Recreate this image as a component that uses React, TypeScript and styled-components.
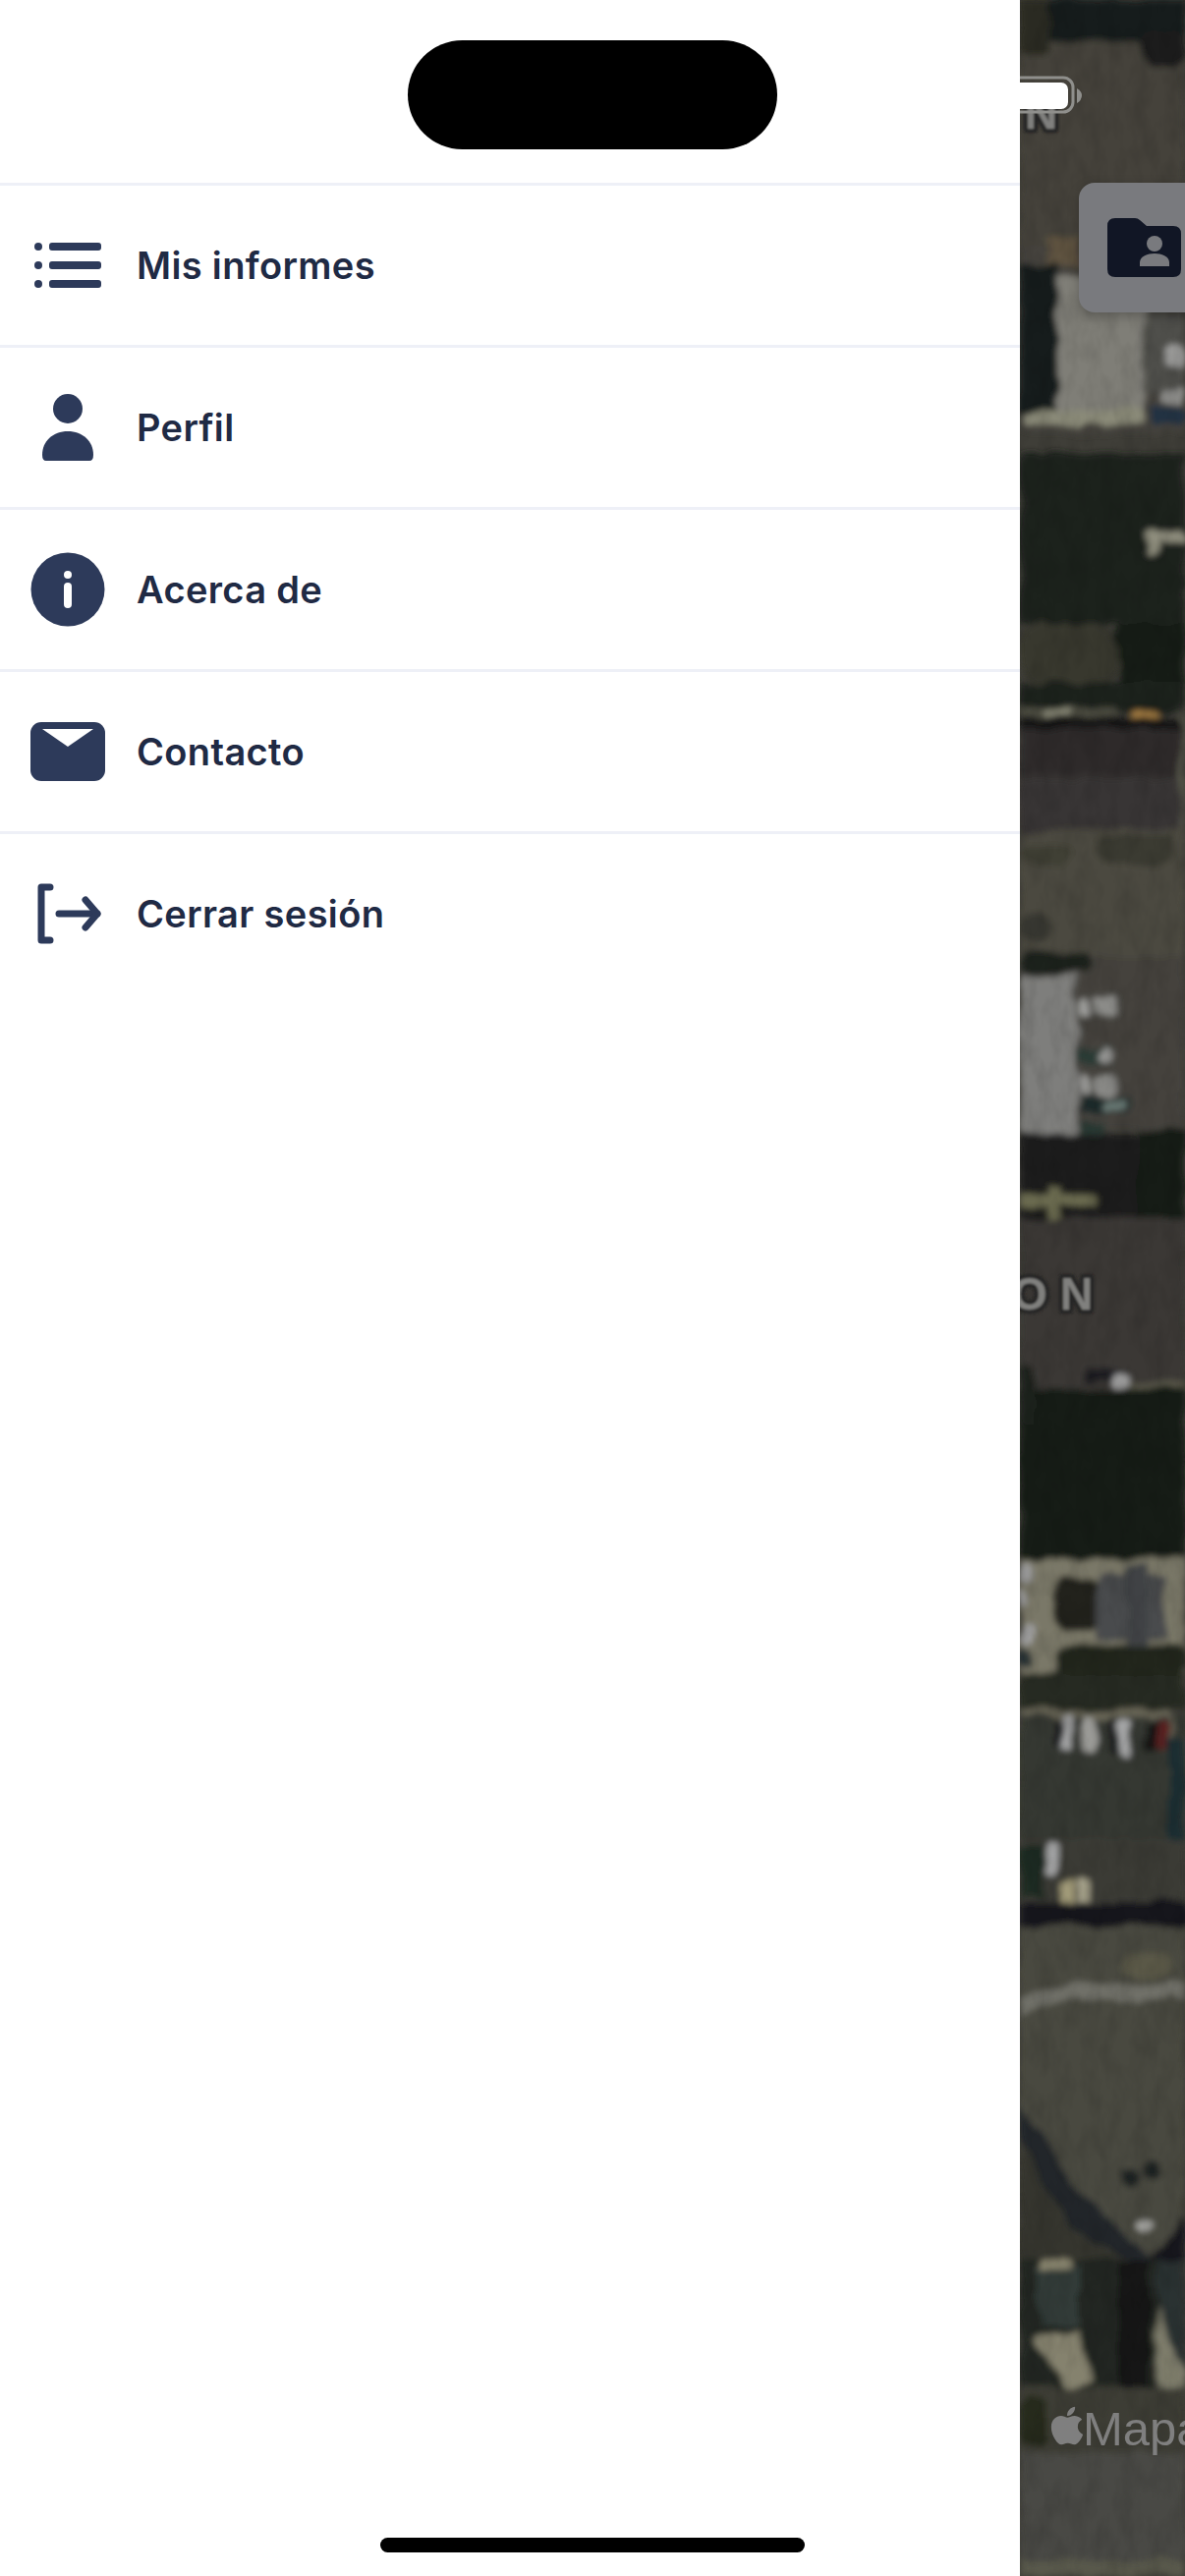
import styled, { createGlobalStyle } from 'styled-components';
import { FaApple } from 'react-icons/fa';

const GlobalStyle = createGlobalStyle`
  html, body {
    margin: 0;
    padding: 0;
    background: #fff;
  }
`;

const Screen = styled.div`
  position: relative;
  display: flex;
  width: 1206px;
  height: 2622px;
  overflow: hidden;
  font-family: Inter, 'Liberation Sans', sans-serif;
`;

const Drawer = styled.nav`
  width: 1038px;
  flex-shrink: 0;
  padding-top: 186px;
  box-sizing: border-box;
  background: #fff;
`;

const MenuRow = styled.div`
  display: flex;
  align-items: center;
  gap: 32px;
  height: 165px;
  box-sizing: border-box;
  padding-left: 31px;
  border-top: 3px solid #eef0f7;
`;

const MenuIcon = styled.svg`
  width: 76px;
  height: 76px;
  flex-shrink: 0;
  color: #2d3a5a;
`;

const MenuLabel = styled.span`
  color: #1f2a44;
  font-size: 38px;
  font-weight: 600;
  letter-spacing: 0.35px;
  line-height: 1;
`;

const MapPane = styled.div`
  position: relative;
  flex: 1;
  overflow: hidden;
  background: #3f3e38;
`;

const MapArt = styled.svg`
  display: block;
  width: 168px;
  height: 2622px;
`;

const MapLabel = styled.text`
  font-family: 'Liberation Sans', sans-serif;
  font-size: 46px;
  font-weight: 700;
  fill: #80807e;
  stroke: #282725;
  stroke-width: 9px;
  stroke-linejoin: round;
  paint-order: stroke;
`;

const Battery = styled.svg`
  position: absolute;
  left: 0;
  top: 76px;
  width: 66px;
  height: 42px;
`;

const FolderButton = styled.div`
  position: absolute;
  left: 60px;
  top: 186px;
  width: 140px;
  height: 132px;
  display: flex;
  align-items: center;
  padding-left: 29px;
  box-sizing: border-box;
  border-radius: 16px;
  background: #797a7e;
  box-shadow: 0 4px 12px rgba(0, 0, 0, 0.25);
`;

const FolderIcon = styled.svg`
  width: 75px;
  height: 60px;
  flex-shrink: 0;
`;

const Attribution = styled.div`
  position: absolute;
  left: 26px;
  top: 2446px;
  display: flex;
  align-items: center;
  color: #7f7f7f;
  font-family: 'Liberation Sans', sans-serif;
  font-size: 49px;
  line-height: 52px;
  white-space: nowrap;

  svg {
    margin: 0 -6px 7px 0;
  }
`;

const Island = styled.div`
  position: absolute;
  left: 415px;
  top: 41px;
  width: 376px;
  height: 111px;
  border-radius: 56px;
  background: #000;
`;

const HomeIndicator = styled.div`
  position: absolute;
  left: 387px;
  top: 2583px;
  width: 432px;
  height: 15px;
  border-radius: 8px;
  background: #000;
`;

type Shape = { x: number; y: number; w: number; h: number; c: string; r?: number };

// map blocks from top to bottom, x is measured from the drawer edge
const blocks: Shape[] = [
  { x: 0, y: 0, w: 168, h: 250, c: '#44423b' },
  { x: 0, y: 0, w: 32, h: 55, c: '#2a2c24' },
  { x: 30, y: 0, w: 138, h: 42, c: '#191c1b' },
  { x: 125, y: 30, w: 43, h: 38, c: '#1c1f1d', r: 14 },
  { x: 0, y: 250, w: 168, h: 190, c: '#45433d' },
  { x: 28, y: 240, w: 32, h: 32, c: '#5e5340' },
  { x: 0, y: 268, w: 40, h: 150, c: '#171c1d' },
  { x: 38, y: 280, w: 90, h: 140, c: '#7f7e77' },
  { x: 4, y: 418, w: 122, h: 14, c: '#8a8a78' },
  { x: 125, y: 322, w: 43, h: 78, c: '#4f4f4c' },
  { x: 146, y: 354, w: 22, h: 18, c: '#9a9a98', r: 4 },
  { x: 144, y: 395, w: 24, h: 16, c: '#8f8f8c', r: 4 },
  { x: 132, y: 415, w: 36, h: 18, c: '#233043', r: 7 },
  { x: 0, y: 462, w: 168, h: 173, c: '#1b201b' },
  { x: 125, y: 540, w: 43, h: 13, c: '#8e8d7d', r: 6 },
  { x: 128, y: 538, w: 12, h: 28, c: '#8e8d7d', r: 6 },
  { x: 0, y: 635, w: 100, h: 60, c: '#39392f', r: 20 },
  { x: 100, y: 635, w: 68, h: 85, c: '#171c18' },
  { x: 0, y: 695, w: 168, h: 30, c: '#1c211d' },
  { x: 0, y: 720, w: 100, h: 10, c: '#4c4c40' },
  { x: 26, y: 722, w: 30, h: 7, c: '#8a8a78' },
  { x: 115, y: 722, w: 24, h: 8, c: '#a88045', r: 3 },
  { x: 0, y: 730, w: 168, h: 12, c: '#151819' },
  { x: 0, y: 742, w: 165, h: 50, c: '#2e2b2c' },
  { x: 0, y: 793, w: 165, h: 52, c: '#383536' },
  { x: 163, y: 730, w: 5, h: 250, c: '#55544a' },
  { x: 0, y: 845, w: 168, h: 130, c: '#4b4a3f' },
  { x: 0, y: 860, w: 50, h: 20, c: '#3f3f34', r: 9 },
  { x: 80, y: 850, w: 75, h: 30, c: '#3a3a30', r: 12 },
  { x: 0, y: 930, w: 30, h: 30, c: '#383930', r: 12 },
  { x: 0, y: 975, w: 168, h: 175, c: '#45433e' },
  { x: 0, y: 968, w: 70, h: 22, c: '#1d211c', r: 8 },
  { x: 0, y: 992, w: 58, h: 163, c: '#7e7e7c', r: 3 },
  { x: 61, y: 1015, w: 11, h: 20, c: '#9c9c9a', r: 5 },
  { x: 76, y: 1017, w: 22, h: 16, c: '#8b8b88', r: 3 },
  { x: 60, y: 1067, w: 34, h: 16, c: '#2c3a36', r: 3 },
  { x: 81, y: 1068, w: 14, h: 14, c: '#9a9a98', r: 6 },
  { x: 59, y: 1096, w: 12, h: 18, c: '#9c9c9a', r: 5 },
  { x: 75, y: 1096, w: 22, h: 18, c: '#8b8b88', r: 4 },
  { x: 60, y: 1116, w: 50, h: 16, c: '#1d2a2c', r: 3 },
  { x: 86, y: 1120, w: 20, h: 10, c: '#6b7a76', r: 4 },
  { x: 60, y: 1140, w: 30, h: 16, c: '#2c3a36', r: 3 },
  { x: 0, y: 1155, w: 168, h: 100, c: '#1b1f1a' },
  { x: 120, y: 1150, w: 48, h: 110, c: '#161a18' },
  { x: 0, y: 1216, w: 78, h: 12, c: '#6a6a50' },
  { x: 28, y: 1206, w: 12, h: 36, c: '#6a6a50' },
  { x: 0, y: 1240, w: 168, h: 175, c: '#3a3936' },
  { x: 66, y: 1395, w: 40, h: 12, c: '#1a1d22', r: 4 },
  { x: 96, y: 1398, w: 14, h: 16, c: '#a5a5a5', r: 5 },
  { x: 110, y: 1409, w: 58, h: 6, c: '#5b5a4c' },
  { x: 0, y: 1415, w: 168, h: 172, c: '#181d18' },
  { x: 0, y: 1390, w: 14, h: 60, c: '#1e221e', r: 6 },
  { x: 0, y: 1587, w: 168, h: 118, c: '#7a7868' },
  { x: 0, y: 1590, w: 12, h: 22, c: '#9e9e9e', r: 5 },
  { x: 0, y: 1620, w: 8, h: 16, c: '#9e9e9e', r: 4 },
  { x: 0, y: 1652, w: 13, h: 22, c: '#9e9e9e', r: 6 },
  { x: 0, y: 1678, w: 11, h: 18, c: '#2a3538', r: 4 },
  { x: 34, y: 1608, w: 48, h: 52, c: '#23241f', r: 10 },
  { x: 80, y: 1602, w: 68, h: 68, c: '#4a4c4e' },
  { x: 108, y: 1592, w: 22, h: 90, c: '#404244' },
  { x: 0, y: 1702, w: 168, h: 38, c: '#262a22' },
  { x: 36, y: 1675, w: 132, h: 30, c: '#21261f', r: 10 },
  { x: 0, y: 1740, w: 156, h: 7, c: '#6a6858' },
  { x: 0, y: 1747, w: 168, h: 125, c: '#363733' },
  { x: 36, y: 1748, w: 10, h: 32, c: '#15181a', r: 4 },
  { x: 44, y: 1744, w: 11, h: 38, c: '#a4a5a6', r: 4 },
  { x: 64, y: 1745, w: 12, h: 38, c: '#9a9a96', r: 4 },
  { x: 90, y: 1750, w: 10, h: 34, c: '#15181a', r: 4 },
  { x: 100, y: 1750, w: 13, h: 40, c: '#a4a5a6', r: 5 },
  { x: 128, y: 1750, w: 14, h: 32, c: '#151414', r: 6 },
  { x: 140, y: 1750, w: 13, h: 32, c: '#5c2420', r: 5 },
  { x: 154, y: 1745, w: 3, h: 65, c: '#6a6858' },
  { x: 151, y: 1770, w: 17, h: 102, c: '#1f2d33' },
  { x: 0, y: 1872, w: 168, h: 64, c: '#3a3a36' },
  { x: 0, y: 1880, w: 24, h: 52, c: '#1f2a22' },
  { x: 27, y: 1876, w: 11, h: 34, c: '#a4a5a6', r: 4 },
  { x: 44, y: 1912, w: 12, h: 28, c: '#a09a78', r: 2 },
  { x: 58, y: 1912, w: 13, h: 28, c: '#a39f88', r: 2 },
  { x: 0, y: 1936, w: 168, h: 24, c: '#15191a' },
  { x: 0, y: 1960, w: 168, h: 340, c: '#4a4941' },
  { x: 105, y: 1990, w: 50, h: 24, c: '#5a5847', r: 12 },
  { x: 0, y: 2300, w: 168, h: 140, c: '#222722' },
  { x: 18, y: 2305, w: 42, h: 62, c: '#333a38' },
  { x: 140, y: 2300, w: 28, h: 130, c: '#2b3230' },
  { x: 0, y: 2430, w: 168, h: 70, c: '#3d3d35' },
  { x: 0, y: 2440, w: 30, h: 50, c: '#26291f', r: 10 },
  { x: 0, y: 2496, w: 168, h: 110, c: '#4a4a44' },
  { x: 0, y: 2605, w: 168, h: 17, c: '#58584c' },
];

export default function App() {
  return (
    <Screen>
      <GlobalStyle />
      <Drawer>
        <MenuRow>
          <MenuIcon viewBox="0 0 76 76">
            <g fill="currentColor">
              <circle cx="8" cy="19" r="4" />
              <circle cx="8" cy="38" r="4" />
              <circle cx="8" cy="57" r="4" />
              <rect x="19" y="15" width="53" height="8" rx="3" />
              <rect x="19" y="34" width="53" height="8" rx="3" />
              <rect x="19" y="53" width="53" height="8" rx="3" />
            </g>
          </MenuIcon>
          <MenuLabel>Mis informes</MenuLabel>
        </MenuRow>
        <MenuRow>
          <MenuIcon viewBox="0 0 76 76">
            <g fill="currentColor">
              <circle cx="38" cy="19" r="15" />
              <path d="M12 66 C12 52 23 42 38 42 C53 42 64 52 64 66 Q64 72 60 72 L16 72 Q12 72 12 66 Z" />
            </g>
          </MenuIcon>
          <MenuLabel>Perfil</MenuLabel>
        </MenuRow>
        <MenuRow>
          <MenuIcon viewBox="0 0 76 76">
            <circle cx="38" cy="38" r="37.5" fill="currentColor" />
            <circle cx="38" cy="23" r="4" fill="#fff" />
            <rect x="34" y="31" width="8" height="26" rx="4" fill="#fff" />
          </MenuIcon>
          <MenuLabel>Acerca de</MenuLabel>
        </MenuRow>
        <MenuRow>
          <MenuIcon viewBox="0 0 76 76">
            <rect x="0" y="8" width="76" height="60" rx="11" fill="currentColor" />
            <path d="M12 15 L64 15 L38 33 Z" fill="#fff" />
          </MenuIcon>
          <MenuLabel>Contacto</MenuLabel>
        </MenuRow>
        <MenuRow>
          <MenuIcon viewBox="0 0 76 76">
            <g fill="none" stroke="currentColor" strokeWidth="7" strokeLinecap="round" strokeLinejoin="round">
              <path d="M20 11 L11 11 L11 65 L20 65" />
              <path d="M29 38 L68 38" />
              <path d="M56 24 L68 38 L56 52" />
            </g>
          </MenuIcon>
          <MenuLabel>Cerrar sesión</MenuLabel>
        </MenuRow>
      </Drawer>
      <MapPane>
        <MapArt viewBox="0 0 168 2622" preserveAspectRatio="none">
          <defs>
            <filter id="soften" x="-5%" y="-1%" width="110%" height="102%">
              <feTurbulence type="fractalNoise" baseFrequency="0.03" numOctaves="3" seed="7" result="warp" />
              <feDisplacementMap in="SourceGraphic" in2="warp" scale="14" xChannelSelector="R" yChannelSelector="G" />
              <feGaussianBlur stdDeviation="3.4" />
            </filter>
            <filter id="labelBlur">
              <feGaussianBlur stdDeviation="0.9" />
            </filter>
            <filter id="grain">
              <feTurbulence type="fractalNoise" baseFrequency="0.06 0.03" numOctaves="3" seed="4" />
              <feColorMatrix values="0 0 0 0 0  0 0 0 0 0  0 0 0 0 0  0 0 0 1.6 -0.6" />
            </filter>
          </defs>
          <g filter="url(#soften)">
            {blocks.map((b, i) => (
              <rect key={i} x={b.x} y={b.y} width={b.w} height={b.h} rx={b.r ?? 0} fill={b.c} />
            ))}
            <path d="M0 2042 L50 2028 L168 2028" fill="none" stroke="#6f6f68" strokeWidth="14" />
            <path d="M0 2140 L60 2230 L135 2300 L0 2300 Z" fill="#23272a" />
            <path d="M0 2180 L50 2270 L110 2300 L0 2300 Z" fill="#35362d" />
            <path d="M130 2300 L168 2255 L168 2300 Z" fill="#15191a" />
            <circle cx="127" cy="2265" r="7" fill="#a8a8a4" />
            <ellipse cx="110" cy="2215" rx="10" ry="8" fill="#1c2022" />
            <ellipse cx="135" cy="2208" rx="10" ry="9" fill="#1c2022" />
            <path d="M10 2382 L60 2372 L72 2420 L50 2432 Z" fill="#85826e" />
            <path d="M140 2345 L168 2420 L168 2430 L140 2430 Z" fill="#7d7b6a" />
            <rect x="100" y="2300" width="32" height="130" fill="#141917" />
            <path d="M22 2300 H50 V2308 H22 Z" fill="#8a8670" />
          </g>
          <rect x="0" y="0" width="168" height="2622" filter="url(#grain)" opacity="0.12" />
          <g filter="url(#labelBlur)">
            <MapLabel x="5" y="131">N</MapLabel>
            <MapLabel x="-8" y="1333">O</MapLabel>
            <MapLabel x="41" y="1333">N</MapLabel>
          </g>
        </MapArt>
        <Battery viewBox="0 0 66 42">
          <rect x="-12" y="3" width="66" height="35" rx="10" fill="none" stroke="#8f8f8c" strokeWidth="3" />
          <rect x="-12" y="8" width="61" height="27" rx="7" fill="#fff" />
          <path d="M58 14 Q63 17 63 21 Q63 26 58 29 Z" fill="#8f8f8c" />
        </Battery>
        <FolderButton>
          <FolderIcon viewBox="0 0 75 60">
            <path
              d="M8 0 H28 Q31 0 33 2 L40 8 H67 Q75 8 75 16 V52 Q75 60 67 60 H8 Q0 60 0 52 V8 Q0 0 8 0 Z"
              fill="#111625"
            />
            <circle cx="48" cy="26" r="8" fill="#797a7e" />
            <path d="M33 49 V45 C33 39 41 36 48 36 C55 36 63 39 63 45 V49 Z" fill="#797a7e" />
          </FolderIcon>
        </FolderButton>
        <Attribution>
          <FaApple size={44} />
          <span>Mapas</span>
        </Attribution>
      </MapPane>
      <Island />
      <HomeIndicator />
    </Screen>
  );
}
